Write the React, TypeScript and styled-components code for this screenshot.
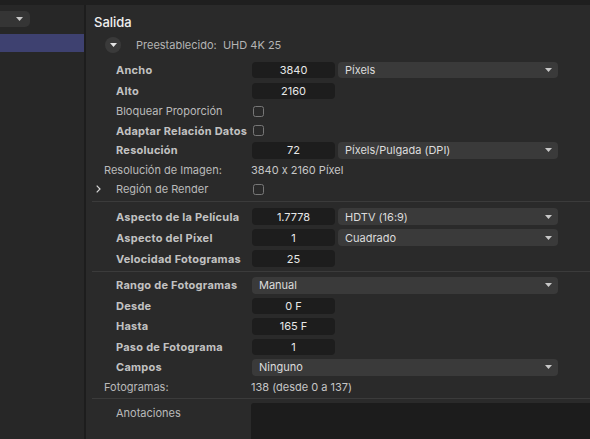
import React from "react";
import styled, { createGlobalStyle } from "styled-components";

const GlobalStyle = createGlobalStyle`
  *, *::before, *::after { box-sizing: border-box; }
  html, body { margin: 0; padding: 0; background: #2a2a2a; }
  body {
    font-family: Inter, "Liberation Sans", sans-serif;
    font-feature-settings: "calt" 0;
    -webkit-font-smoothing: antialiased;
  }
`;

const S = {
  Window: styled.div`
    width: 590px;
    height: 439px;
    overflow: hidden;
    display: flex;
    flex-direction: column;
    background: #2a2a2a;
  `,
  TopBar: styled.div`
    height: 5px;
    flex: none;
    background: #1f1f1f;
  `,
  Body: styled.div`
    flex: 1;
    display: flex;
    min-height: 0;
  `,
  Sidebar: styled.aside`
    width: 86px;
    flex: none;
    background: #272727;
    border-right: 2px solid #1d1d1d;
    display: flex;
    flex-direction: column;
    gap: 7px;
    padding-top: 6px;
  `,
  SideSelect: styled.div`
    width: 30px;
    height: 16px;
    background: #353535;
    border-radius: 0 5px 5px 0;
    display: flex;
    align-items: center;
    justify-content: flex-end;
    padding-right: 7px;
  `,
  SideItem: styled.div`
    height: 18px;
    background: #3e4170;
  `,
  Main: styled.main`
    flex: 1;
    min-width: 0;
    display: flex;
    flex-direction: column;
    padding-left: 6px;
  `,
  Title: styled.h2`
    margin: 9px 0 0 2px;
    font-size: 13px;
    line-height: 16px;
    font-weight: 500;
    color: #f0f0f0;
  `,
  PresetRow: styled.div`
    height: 18px;
    margin-top: 6px;
    display: flex;
    align-items: center;
    padding-left: 13px;
  `,
  Disclosure: styled.button`
    width: 16px;
    height: 16px;
    border: none;
    padding: 0;
    border-radius: 50%;
    background: #3a3a3a;
    display: flex;
    align-items: center;
    justify-content: center;
  `,
  PresetText: styled.span`
    margin-left: 15px;
    font-size: 11px;
    color: #b4b4b4;
    white-space: pre;
  `,
  Section: styled.section<{ $top: number }>`
    display: flex;
    flex-direction: column;
    margin-top: ${(p) => p.$top}px;
  `,
  Row: styled.div<{ $h?: number }>`
    display: flex;
    align-items: center;
    height: ${(p) => p.$h ?? 21}px;
    flex: none;
  `,
  Label: styled.div<{ $indent?: number; $bold?: boolean }>`
    width: 160px;
    flex: none;
    display: flex;
    align-items: center;
    padding-left: ${(p) => p.$indent ?? 24}px;
    font-size: 11px;
    font-weight: ${(p) => (p.$bold ? 700 : 400)};
    letter-spacing: ${(p) => (p.$bold ? "0.25px" : "0")};
    color: ${(p) => (p.$bold ? "#c2c2c2" : "#bababa")};
    white-space: nowrap;
  `,
  Chevron: styled.span`
    width: 20px;
    display: flex;
    align-items: center;
  `,
  NumberField: styled.div`
    width: 83px;
    height: 16.5px;
    flex: none;
    border-radius: 4px;
    background: #1d1d1d;
    color: #e8e8e8;
    font-size: 11px;
    display: flex;
    align-items: center;
    justify-content: center;
  `,
  Select: styled.div<{ $wide?: boolean }>`
    width: ${(p) => (p.$wide ? 306 : 220)}px;
    height: 16.5px;
    flex: none;
    margin-left: ${(p) => (p.$wide ? 0 : 3)}px;
    border-radius: 4px;
    background: #3a3a3a;
    color: #dcdcdc;
    font-size: 11px;
    display: flex;
    align-items: center;
    justify-content: space-between;
    padding: 0 6px 0 7px;
  `,
  Checkbox: styled.div`
    width: 11px;
    height: 11px;
    margin-left: 1px;
    border: 1.5px solid #777;
    border-radius: 2.5px;
  `,
  Value: styled.span`
    margin-left: -1px;
    font-size: 11px;
    color: #c6c6c6;
  `,
  Divider: styled.hr<{ $top: number }>`
    margin: ${(p) => p.$top}px 0 0 0;
    border: none;
    height: 1px;
    flex: none;
    background: #3b3b3b;
  `,
  NotesRow: styled.div`
    flex: 1;
    display: flex;
    margin-top: 4px;
  `,
  NotesLabel: styled.div`
    width: 159px;
    flex: none;
    padding: 3px 0 0 24px;
    font-size: 11px;
    color: #bababa;
  `,
  NotesArea: styled.div`
    flex: 1;
    background: #1c1c1c;
    border-radius: 3px 0 0 0;
  `,
};

const Arrow = () => (
  <svg width="7" height="4" viewBox="0 0 7 4">
    <path d="M0 0h7L3.5 4z" fill="#c8c8c8" />
  </svg>
);

const Num = ({ label, value }: { label: string; value: string }) => (
  <S.Row>
    <S.Label $bold>{label}</S.Label>
    <S.NumberField>{value}</S.NumberField>
  </S.Row>
);

const NumSelect = ({ label, value, option, h }: { label: string; value: string; option: string; h?: number }) => (
  <S.Row $h={h}>
    <S.Label $bold>{label}</S.Label>
    <S.NumberField>{value}</S.NumberField>
    <S.Select>
      <span>{option}</span>
      <Arrow />
    </S.Select>
  </S.Row>
);

const App = () => {
  return (
    <S.Window>
      <GlobalStyle />
      <S.TopBar />
      <S.Body>
        <S.Sidebar>
          <S.SideSelect>
            <Arrow />
          </S.SideSelect>
          <S.SideItem />
        </S.Sidebar>
        <S.Main>
          <S.Title>Salida</S.Title>
          <S.PresetRow>
            <S.Disclosure title="Preestablecido">
              <svg width="7" height="4" viewBox="0 0 7 4">
                <path d="M0 0h7L3.5 4z" fill="#e6e6e6" />
              </svg>
            </S.Disclosure>
            <S.PresetText>Preestablecido:  UHD 4K 25</S.PresetText>
          </S.PresetRow>

          <S.Section $top={5.5}>
            <NumSelect label="Ancho" value="3840" option="Píxels" />
            <Num label="Alto" value="2160" />
            <S.Row $h={19.5}>
              <S.Label>Bloquear Proporción</S.Label>
              <S.Checkbox />
            </S.Row>
            <S.Row $h={19}>
              <S.Label $bold>Adaptar Relación Datos</S.Label>
              <S.Checkbox />
            </S.Row>
            <NumSelect label="Resolución" value="72" option="Píxels/Pulgada (DPI)" h={20.5} />
            <S.Row $h={19}>
              <S.Label $indent={12}>Resolución de Imagen:</S.Label>
              <S.Value>3840 x 2160 Píxel</S.Value>
            </S.Row>
            <S.Row $h={19}>
              <S.Label $indent={4}>
                <S.Chevron>
                  <svg width="5" height="8" viewBox="0 0 5 8">
                    <path d="M0.7 0.7L4 4 0.7 7.3" stroke="#d8d8d8" strokeWidth="1.2" fill="none" />
                  </svg>
                </S.Chevron>
                Región de Render
              </S.Label>
              <S.Checkbox />
            </S.Row>
          </S.Section>

          <S.Divider $top={2} />

          <S.Section $top={4.5}>
            <NumSelect label="Aspecto de la Película" value="1.7778" option="HDTV (16:9)" />
            <NumSelect label="Aspecto del Píxel" value="1" option="Cuadrado" />
            <Num label="Velocidad Fotogramas" value="25" />
          </S.Section>

          <S.Divider $top={1.5} />

          <S.Section $top={3.5}>
            <S.Row $h={20.5}>
              <S.Label $bold>Rango de Fotogramas</S.Label>
              <S.Select $wide>
                <span>Manual</span>
                <Arrow />
              </S.Select>
            </S.Row>
            <S.Row $h={20.5}>
              <S.Label $bold>Desde</S.Label>
              <S.NumberField>0 F</S.NumberField>
            </S.Row>
            <S.Row $h={20.5}>
              <S.Label $bold>Hasta</S.Label>
              <S.NumberField>165 F</S.NumberField>
            </S.Row>
            <S.Row $h={20.5}>
              <S.Label $bold>Paso de Fotograma</S.Label>
              <S.NumberField>1</S.NumberField>
            </S.Row>
            <S.Row $h={20.5}>
              <S.Label $bold>Campos</S.Label>
              <S.Select $wide>
                <span>Ninguno</span>
                <Arrow />
              </S.Select>
            </S.Row>
            <S.Row $h={18.5}>
              <S.Label $indent={12}>Fotogramas:</S.Label>
              <S.Value>138 (desde 0 a 137)</S.Value>
            </S.Row>
          </S.Section>

          <S.Divider $top={2} />

          <S.NotesRow>
            <S.NotesLabel>Anotaciones</S.NotesLabel>
            <S.NotesArea />
          </S.NotesRow>
        </S.Main>
      </S.Body>
    </S.Window>
  );
};

export default App;
